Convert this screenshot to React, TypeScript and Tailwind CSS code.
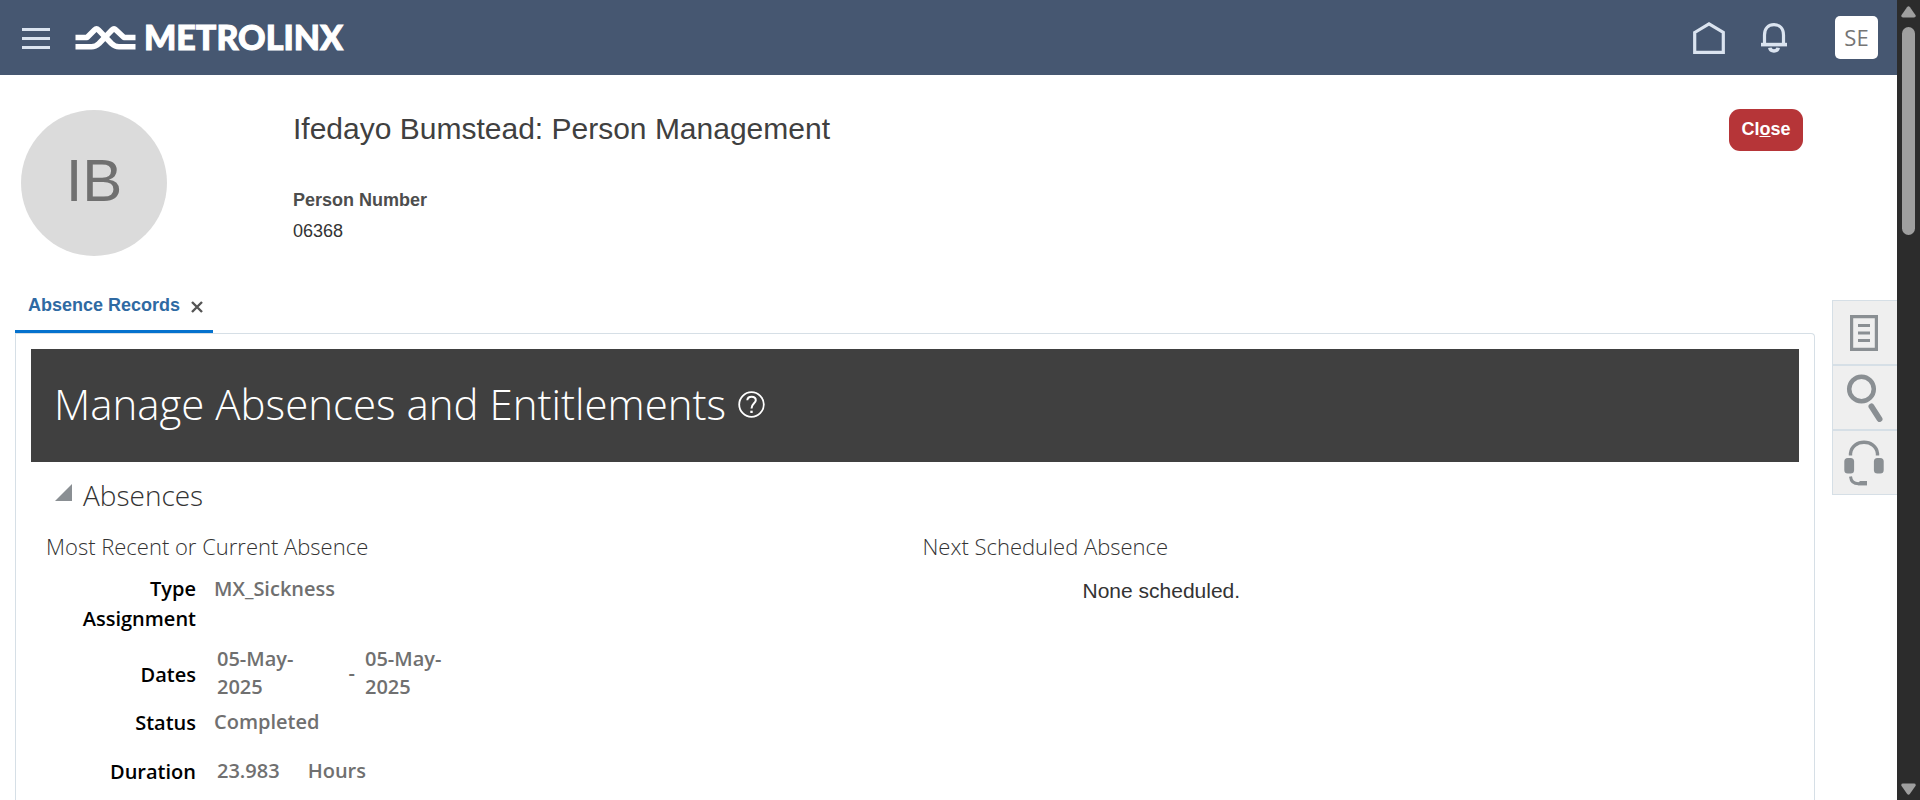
import React from "react";

const arial = "font-['Liberation_Sans',Arial,sans-serif]";
const humanist = "font-['Open_Sans','Noto_Sans',sans-serif]";

function Logo() {
  return (
    <a href="#home" aria-label="Metrolinx home" className="ml-[25px] flex items-center gap-[8px] text-white">
      <svg width="61" height="26" viewBox="0 0 61 26" fill="none" stroke="currentColor" strokeWidth="5.6" strokeLinejoin="round">
        <path d="M0.5 12.500H12L19.500 5Q21.500 3 23.500 5L36.500 18.500Q40 21.800 44 21.800H60.500" />
        <path d="M0.5 21.800H16.500Q20.500 21.800 24 18.500L37 5Q39 3 41 5L49 12.500H60.500" />
      </svg>
      <span className="pb-[2px] font-['Lato',sans-serif] text-[34px] leading-[40px] font-black [-webkit-text-stroke:1px_white]">METROLINX</span>
    </a>
  );
}

function Header() {
  return (
    <header className="flex h-[75px] items-center bg-[#465771] pr-[19px] pl-[22px] text-[#dbe4f0]">
      <button type="button" aria-label="Navigator">
        <svg width="28" height="24" viewBox="0 0 28 24" fill="none" stroke="currentColor" strokeWidth="3">
          <path d="M0 3.500H28M0 12.500H28M0 21.500H28" />
        </svg>
      </button>
      <Logo />
      <div className="ml-auto flex items-center">
        <a href="#home" aria-label="Home">
          <svg width="34" height="34" viewBox="0 0 34 34" fill="none" stroke="currentColor" strokeWidth="3.2">
            <path d="M2.700 11.500L17 2.800L31.300 11.500V31.300H2.700Z" />
          </svg>
        </a>
        <button type="button" aria-label="Notifications" className="ml-[34px]">
          <svg width="28" height="32" viewBox="0 0 28 32" fill="none" stroke="currentColor" strokeWidth="3.2">
            <path d="M4.500 22.500V13C4.500 6.500 8.500 2.700 14 2.700S23.500 6.500 23.500 13V22.500" />
            <path d="M1 22.600H27" strokeWidth="3.600" />
            <path d="M9.800 25.800C10.500 30 17.500 30 18.200 25.800" strokeWidth="3.600" />
          </svg>
        </button>
        <button type="button" aria-label="Settings and actions" className="ml-[47px] flex size-[43px] items-center justify-center rounded-[5px] bg-white font-['Open_Sans',sans-serif] text-[22px] text-[#757575]">
          SE
        </button>
      </div>
    </header>
  );
}

function Profile() {
  return (
    <section className={`flex items-start pt-[34px] pr-[94px] pl-[21px] ${arial}`}>
      <div className="mt-px flex size-[146px] shrink-0 items-center justify-center rounded-full bg-[#dbdbdb] pb-[4px] text-[60px] text-[#707070]">
        IB
      </div>
      <div className="ml-[126px] flex-1">
        <h1 className="text-[30px] leading-[40px] text-[#404040]">Ifedayo Bumstead: Person Management</h1>
        <dl className="mt-[36px] text-lg">
          <dt className="leading-[30px] font-bold text-[#4d4d4d]">Person Number</dt>
          <dd className="leading-[32px] text-[#333333]">06368</dd>
        </dl>
      </div>
      <button type="button" className="h-[42px] w-[74px] rounded-[11px] bg-[#b63538] pb-[3px] text-lg font-bold text-white">
        Cl<span className="underline">o</span>se
      </button>
    </section>
  );
}

const railButton = "flex h-[65px] w-full items-center justify-center border-y border-l border-[#d6dfe6] bg-[#efefef] pr-[2px] text-[#8a8f93]";

function Rail() {
  return (
    <aside aria-label="Quick tools" className="mt-[15px] w-[65px] shrink-0">
      <button type="button" aria-label="Notes" className={railButton}>
        <svg width="28" height="36" viewBox="0 0 28 36" fill="none" stroke="currentColor" strokeWidth="3.2">
          <path d="M1.600 1.600H26.400V34.400H1.600ZM8 10.500H20M8 18H20M8 25.500H20" />
        </svg>
      </button>
      <button type="button" aria-label="Search" className={railButton}>
        <svg width="38" height="48" viewBox="0 0 38 48" fill="none" stroke="currentColor">
          <circle cx="16.500" cy="15" r="12.300" strokeWidth="4.500" />
          <path d="M26.500 32.500L34.500 45" strokeWidth="6" strokeLinecap="round" />
        </svg>
      </button>
      <button type="button" aria-label="Help desk" className={railButton}>
        <svg width="40" height="46" viewBox="0 0 40 46" fill="none" stroke="currentColor" strokeWidth="3">
          <path d="M6.500 15.500V13.500C8 -1.500 32 -1.500 33.500 13.500V15.500" strokeWidth="3.400" />
          <rect x="0.300" y="18" width="9.800" height="15.500" rx="3.500" fill="currentColor" stroke="none" />
          <rect x="29.900" y="18" width="9.800" height="15.500" rx="3.500" fill="currentColor" stroke="none" />
          <path d="M6.500 36.500C7 41 10 43.800 14.500 43.800H23" />
          <path d="M13.500 43.500L16 41H23V45.300H14Z" fill="currentColor" stroke="none" />
        </svg>
      </button>
    </aside>
  );
}

function AbsenceDetails() {
  return (
    <dl className="mt-[9px] grid grid-cols-[150px_1fr] gap-x-[18px] text-[20px] leading-[28px] font-semibold text-[#707070] [&_dt]:text-right [&_dt]:text-black">
      <dt>Type</dt>
      <dd>MX_Sickness</dd>
      <dt className="mt-[2px]">Assignment</dt>
      <dd />
      <dt className="mt-[12px] self-center pt-[4px]">Dates</dt>
      <dd className="mt-[12px] flex items-center pl-[3px]">
        <span className="w-[100px]">05-May-2025</span>
        <span className="w-[48px] pr-[10px] text-right">-</span>
        <span className="w-[100px]">05-May-2025</span>
      </dd>
      <dt className="mt-[8px]">Status</dt>
      <dd className="mt-[7px]">Completed</dd>
      <dt className="mt-[21px]">Duration</dt>
      <dd className="mt-[20px] flex gap-[28px] pl-[3px]">
        <span>23.983</span>
        <span>Hours</span>
      </dd>
    </dl>
  );
}

function AbsencePanel() {
  return (
    <section className={`flex-1 rounded-tr border border-b-0 border-[#d6dfe6] px-[15px] pt-[15px] ${humanist}`}>
      <div className="flex h-[113px] items-center gap-[12px] bg-[#404040] pb-[3px] pl-[23px] text-white">
        <h2 className="text-[42px] leading-[60px] font-light">Manage Absences and Entitlements</h2>
        <button type="button" aria-label="Help">
          <svg width="27" height="27" viewBox="0 0 27 27" fill="none" stroke="currentColor" strokeWidth="1.800">
            <circle cx="13.500" cy="13.500" r="12.300" />
            <path d="M9.300 9.300C9.600 4.600 17.800 4.600 17.800 9.300C17.800 12.400 13.500 12.400 13.500 17.500" strokeWidth="2" />
            <path d="M13.500 19.700V22" strokeWidth="2.400" />
          </svg>
        </button>
      </div>
      <div className="mt-[13px] flex h-[40px] items-center gap-[11px] pl-[24px]">
        <button type="button" aria-label="Collapse absences" aria-expanded="true" className="mb-[6px]">
          <svg width="17" height="17" viewBox="0 0 17 17">
            <path d="M17 0V17H0Z" fill="#8a8f93" />
          </svg>
        </button>
        <h3 className="text-[28px] leading-[40px] font-light text-[#333333]">Absences</h3>
      </div>
      <div className="mt-[11px] grid grid-cols-2 pl-[15px]">
        <div>
          <h4 className="text-[22px] leading-[40px] font-light text-[#333333]">Most Recent or Current Absence</h4>
          <AbsenceDetails />
        </div>
        <div>
          <h4 className="text-[22px] leading-[40px] font-light text-[#333333]">Next Scheduled Absence</h4>
          <p className={`mt-[11px] pl-[160px] text-[21px] leading-[28px] text-[#333333] ${arial}`}>None scheduled.</p>
        </div>
      </div>
    </section>
  );
}

function Scrollbar() {
  return (
    <div aria-hidden="true" className="sticky top-0 flex h-screen w-[23px] shrink-0 flex-col items-center bg-[#2c2c2c] pt-[6px] pb-[5px] text-[#9f9f9f]">
      <svg width="15" height="12" viewBox="0 0 15 12" fill="currentColor">
        <path d="M6 1.200Q7.500 -0.800 9 1.200L14.600 9.200Q15.200 11.500 13 11.500H2Q-0.200 11.500 0.400 9.200Z" />
      </svg>
      <div className="mt-[9px] h-[208px] w-[13px] rounded-full bg-[#9f9f9f]" />
      <svg className="mt-auto" width="15" height="12" viewBox="0 0 15 12" fill="currentColor">
        <path d="M6 10.800Q7.500 12.800 9 10.800L14.600 2.800Q15.200 0.500 13 0.500H2Q-0.200 0.500 0.400 2.800Z" />
      </svg>
    </div>
  );
}

export default function App() {
  return (
    <div className="flex min-h-screen bg-white">
      <div className="flex min-w-0 flex-1 flex-col">
        <Header />
        <Profile />
        <div className="mt-[29px] flex flex-1">
          <main className="mr-[17px] ml-[15px] flex flex-1 flex-col">
            <div className={`-mb-px flex h-[49px] w-[198px] items-start gap-[11px] border-b-4 border-[#0572ce] pt-[8px] pl-[13px] ${arial}`}>
              <a href="#absence-records" className="text-lg leading-[24px] font-bold text-[#2f6aa3]">Absence Records</a>
              <button type="button" aria-label="Close Absence Records" className="mt-[8px]">
                <svg width="12" height="12" viewBox="0 0 12 12" fill="none" stroke="#555555" strokeWidth="2.400">
                  <path d="M1 1L11 11M11 1L1 11" />
                </svg>
              </button>
            </div>
            <AbsencePanel />
          </main>
          <Rail />
        </div>
      </div>
      <Scrollbar />
    </div>
  );
}
